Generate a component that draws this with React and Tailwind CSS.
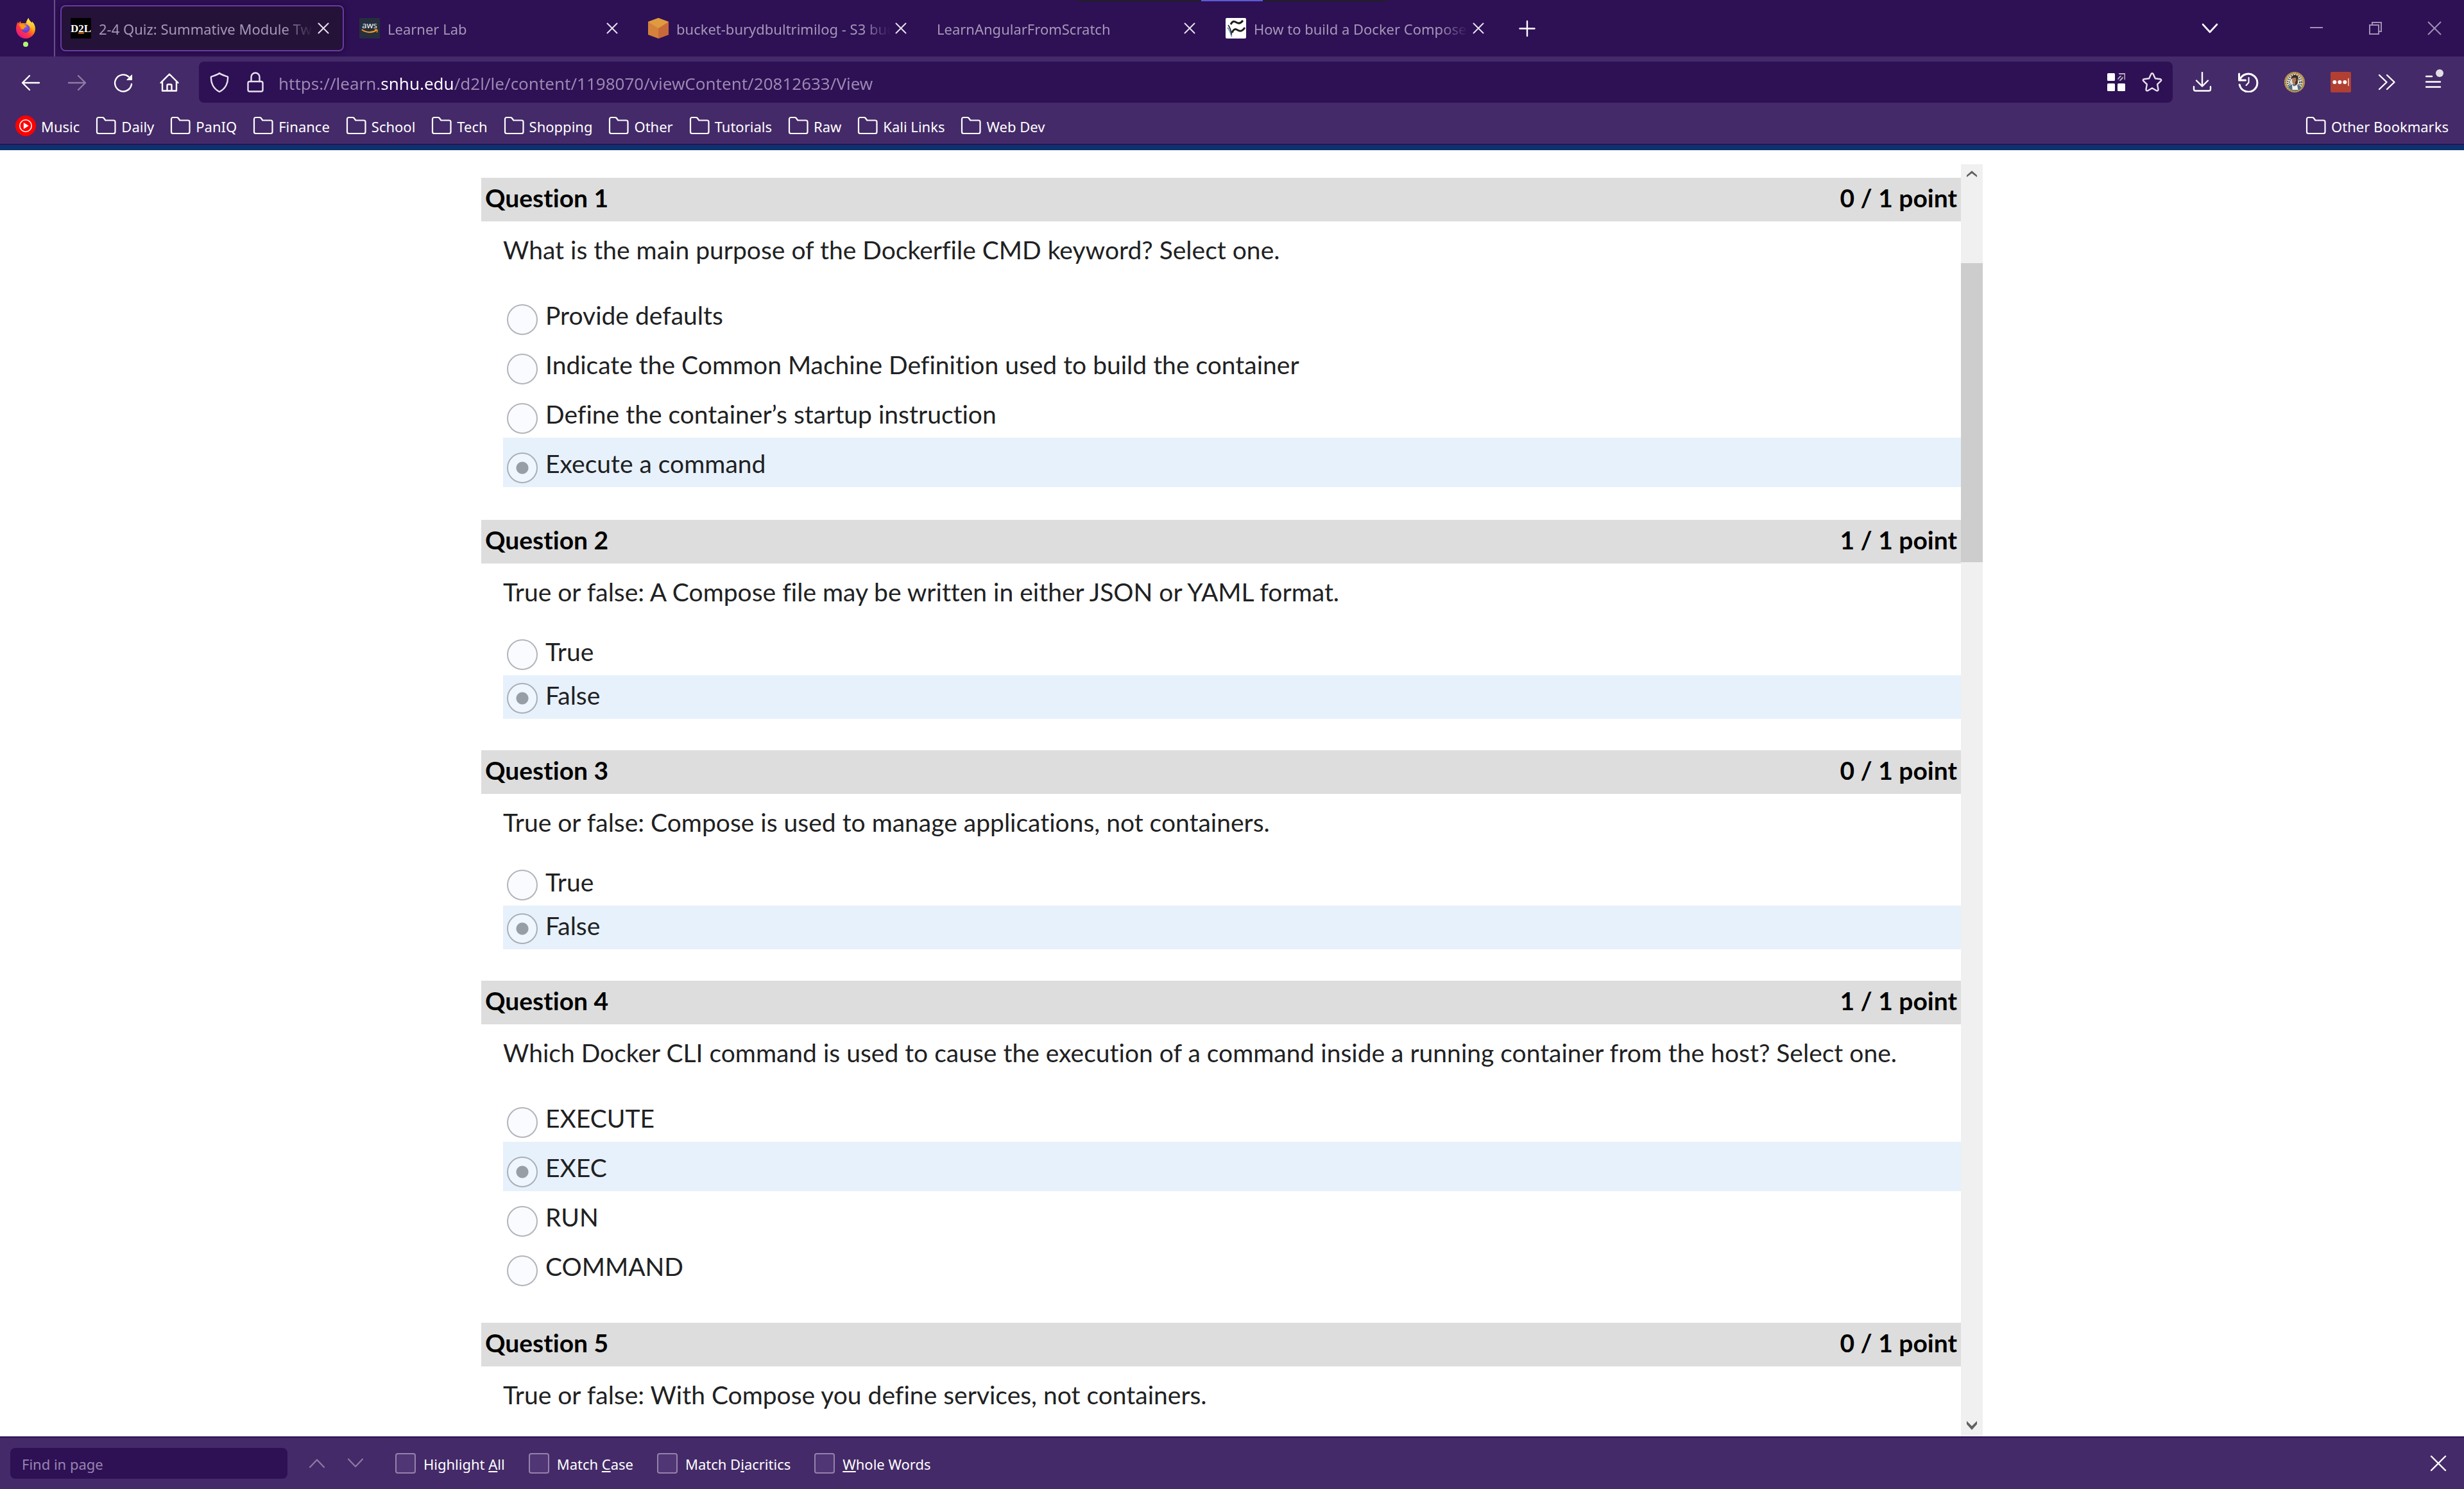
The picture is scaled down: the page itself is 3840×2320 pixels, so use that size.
const questions = [
  {
    points: "0 / 1 point",
    text: "What is the main purpose of the Dockerfile CMD keyword? Select one.",
    options: [
      "Provide defaults",
      "Indicate the Common Machine Definition used to build the container",
      "Define the container’s startup instruction",
      "Execute a command",
    ],
    chosen: 3,
  },
  {
    points: "1 / 1 point",
    text: "True or false: A Compose file may be written in either JSON or YAML format.",
    options: ["True", "False"],
    chosen: 1,
  },
  {
    points: "0 / 1 point",
    text: "True or false: Compose is used to manage applications, not containers.",
    options: ["True", "False"],
    chosen: 1,
  },
  {
    points: "1 / 1 point",
    text: "Which Docker CLI command is used to cause the execution of a command inside a running container from the host? Select one.",
    options: ["EXECUTE", "EXEC", "RUN", "COMMAND"],
    chosen: 1,
  },
  {
    points: "0 / 1 point",
    text: "True or false: With Compose you define services, not containers.",
    options: [],
    chosen: -1,
  },
];

function Icon({ size = 32, sw = 2.4, className = "", children }) {
  return (
    <svg
      width={size}
      height={size}
      viewBox="0 0 32 32"
      fill="none"
      stroke="currentColor"
      strokeWidth={sw}
      strokeLinecap="round"
      strokeLinejoin="round"
      className={className}
      aria-hidden="true"
    >
      {children}
    </svg>
  );
}

function FirefoxLogo() {
  return (
    <svg width="32" height="32" viewBox="0 0 32 32" aria-hidden="true">
      <defs>
        <linearGradient id="ffBody" x1="0.85" y1="0.1" x2="0.2" y2="0.95">
          <stop offset="0" stopColor="#fff44f" />
          <stop offset="0.35" stopColor="#ff980e" />
          <stop offset="0.65" stopColor="#ff3647" />
          <stop offset="1" stopColor="#e31587" />
        </linearGradient>
        <linearGradient id="ffTail" x1="0.5" y1="0" x2="0.5" y2="1">
          <stop offset="0" stopColor="#fff44f" />
          <stop offset="0.6" stopColor="#ffbd2f" />
          <stop offset="1" stopColor="#ff980e" />
        </linearGradient>
        <radialGradient id="ffGlobe" cx="0.5" cy="0.3" r="0.7">
          <stop offset="0" stopColor="#9059ff" />
          <stop offset="1" stopColor="#5b3bc4" />
        </radialGradient>
      </defs>
      <path
        d="M4 6c.3 1 .7 1.900 1.300 2.600C6 7.400 7 5.600 8 5c0 1.300.5 2.500 1.300 3.200 2.500-.5 4.800-.2 6.700.4C17 5 19.200 1.800 20.500 0c.6 4 3.500 5.300 5.200 7.500.5-.4.600-1.200.5-1.900C29.500 9 31 13 31 17c0 8.300-6.700 15-15 15S1 25.300 1 17C1 12.500 2.300 8.800 4 6z"
        fill="url(#ffBody)"
      />
      <path
        d="M20.500 0c.6 4 3.500 5.300 5.200 7.500 3.300 4 3.600 10 .9 14.300-.6-5-3.500-8.600-7.600-11.600C17 8.600 18 3.500 20.500 0z"
        fill="url(#ffTail)"
      />
      <circle cx="16" cy="16.500" r="6.400" fill="url(#ffGlobe)" />
      <path
        d="M5.500 10.500c3.500-1.800 6.500-1 9 .6 1.500.9 3 .8 3 1.700 0 1.300-2.600 1.500-3.300 2.200-.8.900-.3 2.300-1.700 2.700-1.800.5-3.500-.5-4.200-2-.6-1.700-1.500-3.500-2.800-5.200z"
        fill="#ff980e"
      />
    </svg>
  );
}

function D2LIcon() {
  return (
    <svg width="32" height="32" viewBox="0 0 32 32" aria-hidden="true">
      <rect width="32" height="32" fill="#000" />
      <text x="16" y="22" textAnchor="middle" fill="#fff" fontSize="17" fontWeight="700" fontFamily="'Liberation Serif', serif">
        D2L
      </text>
      <rect x="12" y="22.500" width="9" height="2" fill="#e8711c" />
    </svg>
  );
}

function AwsIcon() {
  return (
    <svg width="32" height="32" viewBox="0 0 32 32" aria-hidden="true">
      <rect width="32" height="32" fill="#252f3e" />
      <text x="16" y="16" textAnchor="middle" fill="#fff" fontSize="13" fontFamily="'Open Sans', sans-serif">
        aws
      </text>
      <path d="M4.500 18.500c6.500 4.700 15.500 4.900 22 .6" fill="none" stroke="#f7981f" strokeWidth="2" strokeLinecap="round" />
      <path d="M24.500 18.300c3-.7 4.500-.3 3 3.700" fill="none" stroke="#f7981f" strokeWidth="1.500" strokeLinecap="round" />
    </svg>
  );
}

function BucketIcon() {
  return (
    <svg width="32" height="32" viewBox="0 0 32 32" aria-hidden="true">
      <path d="M16 0 32 6v20l-16 6-16-6V6z" fill="#d4823a" />
      <path d="M32 6v20l-16 6V16z" fill="#c8693a" />
      <path d="M16 0 32 6 16 16 0 6z" fill="#e09a40" />
    </svg>
  );
}

function BlogIcon() {
  return (
    <svg width="32" height="32" viewBox="0 0 32 32" fill="none" aria-hidden="true">
      <rect width="32" height="32" rx="2" fill="#fff" />
      <path d="M3 15c3 3 5 8 6.500 14" stroke="#6f93bd" strokeWidth="2" />
      <path d="M4 11c3 4 4.500 8 5.500 15" stroke="#1d1d1f" strokeWidth="1.500" />
      <path d="M8 10c3-6 6-5 9-3 4 2.500 7 1 10-3" stroke="#1d1d1f" strokeWidth="3" />
      <path d="M10 23c3-7 6-6 9-4 4 2.500 8 1 11-4" stroke="#1d1d1f" strokeWidth="3" />
    </svg>
  );
}

const CloseGlyph = ({ size = 32, sw = 2 }) => (
  <Icon size={size} sw={sw}>
    <path d="M8.500 8.500l15 15M23.500 8.500l-15 15" />
  </Icon>
);

function Tab({ icon, title, active }) {
  return (
    <div className="w-[450px] shrink px-1 py-2">
      <div
        className={
          active
            ? "flex h-full items-center rounded-lg bg-[#251238] px-4 shadow-[0_0_8px_rgba(0,0,0,0.5)] ring-2 ring-[#6b38a8] ring-inset"
            : "flex h-full items-center rounded-lg px-4"
        }
      >
        {icon && <span className="mr-3 shrink-0">{icon}</span>}
        <span className="min-w-0 flex-1 overflow-hidden pt-0.5 whitespace-nowrap text-[#a698b7] [mask-image:linear-gradient(90deg,#000_calc(100%-44px),transparent_100%)]">
          {title}
        </span>
        <button className="shrink-0 text-[#e6e1ec]" aria-label={`Close ${title}`}>
          <CloseGlyph />
        </button>
      </div>
    </div>
  );
}

function TitleBar() {
  return (
    <header className="relative flex h-[88px] shrink-0 bg-[#2e1055]">
      <div className="absolute top-0 left-1/2 flex h-0.5 w-[482px] -translate-x-1/2 justify-center bg-[#1f1f23]">
        <div className="w-24 bg-[#5b5bd6]" />
      </div>
      <button className="flex w-[86px] shrink-0 flex-col items-center border-r-2 border-[#66508a] pt-7 pr-1" aria-label="Pinned tab">
        <FirefoxLogo />
        <span className="mt-[5px] size-2 rounded-full bg-[#b3f772]" />
      </button>
      <nav className="flex min-w-0 pl-1" aria-label="Tabs">
        <Tab icon={<D2LIcon />} title="2-4 Quiz: Summative Module Two" active />
        <Tab icon={<AwsIcon />} title="Learner Lab" />
        <Tab icon={<BucketIcon />} title="bucket-burydbultrimilog - S3 bucket" />
        <Tab title="LearnAngularFromScratch" />
        <Tab icon={<BlogIcon />} title="How to build a Docker Compose" />
      </nav>
      <button className="flex w-20 shrink-0 items-center justify-center text-white" aria-label="New tab">
        <Icon>
          <path d="M16 5v23M4.500 16.500h23" />
        </Icon>
      </button>
      <div className="ml-auto flex shrink-0 text-[#a08fb4]">
        <button className="mr-[88px] flex w-16 items-center justify-center text-white" aria-label="List all tabs">
          <Icon sw={2.600}>
            <path d="M5 10l11 12L27 10" />
          </Icon>
        </button>
        <button className="flex w-[92px] items-center justify-center" aria-label="Minimize">
          <svg width="20" height="20">
            <path d="M0 9h20" stroke="currentColor" strokeWidth="2" />
          </svg>
        </button>
        <button className="flex w-[92px] items-center justify-center" aria-label="Restore">
          <svg width="20" height="20" fill="none" stroke="currentColor" strokeWidth="2">
            <path d="M1 5h14v14H1zM5 5V1h14v14h-4" />
          </svg>
        </button>
        <button className="flex w-[92px] items-center justify-center" aria-label="Close window">
          <svg width="22" height="22" fill="none" stroke="currentColor" strokeWidth="2">
            <path d="M1 1l20 20M21 1L1 21" />
          </svg>
        </button>
      </div>
    </header>
  );
}

function ToolButton({ label, className = "w-[72px]", children }) {
  return (
    <button className={`${className} flex h-16 shrink-0 items-center justify-center`} aria-label={label}>
      {children}
    </button>
  );
}

function Toolbar() {
  return (
    <div className="flex h-20 shrink-0 items-center px-3 text-white">
      <ToolButton label="Back">
        <Icon>
          <path d="M29 17H3M14 6L3 17l11 11" />
        </Icon>
      </ToolButton>
      <ToolButton label="Forward">
        <Icon className="text-[#8d7ba3]">
          <path d="M3 17h26M18 6l11 11-11 11" />
        </Icon>
      </ToolButton>
      <ToolButton label="Reload">
        <Icon>
          <path d="M24.500 7.500A13 13 0 1 0 29 19" />
          <path d="M29.500 5v7.500H22z" fill="currentColor" strokeWidth="1" />
        </Icon>
      </ToolButton>
      <ToolButton label="Home">
        <Icon>
          <path d="M2.500 17L16 3.500 29.500 17M5 15v14.500h22V15M12.500 29V21a1.500 1.500 0 0 1 1.500-1.500h4a1.500 1.500 0 0 1 1.500 1.500v8" />
        </Icon>
      </ToolButton>
      <div className="mx-[10px] flex min-w-0 flex-1 items-center rounded-lg bg-[#2e1055] px-1 text-[#e6e1ec]">
        <ToolButton label="Tracking protection" className="w-14">
          <Icon>
            <path d="M16 2C12.500 5 7 6 3 7.500c-.7 9 3 18.500 13 23.500 10-5 13.700-14.500 13-23.500C25 6 19.500 5 16 2z" />
          </Icon>
        </ToolButton>
        <ToolButton label="Site information" className="w-14">
          <Icon>
            <rect x="4.500" y="15" width="23" height="15.500" rx="2.500" />
            <path d="M9.500 15V8a6.500 6.500 0 0 1 13 0v7" />
          </Icon>
        </ToolButton>
        <input
          type="text"
          aria-label="Address"
          defaultValue="https://learn.snhu.edu/d2l/le/content/1198070/viewContent/20812633/View"
          className="ml-2 h-16 min-w-0 flex-1 bg-[linear-gradient(90deg,#9c8ab1_158px,#fff_158px,#fff_273px,#9c8ab1_273px)] bg-clip-text pt-1 text-[26px] text-transparent outline-none"
        />
        <ToolButton label="Extensions in page" className="w-14">
          <svg width="28" height="28" viewBox="0 0 28 28" aria-hidden="true">
            <g fill="#fff">
              <rect width="12" height="12" rx="1.500" />
              <rect y="16" width="12" height="12" rx="1.500" />
              <rect x="16" y="16" width="12" height="12" rx="1.500" />
            </g>
            <path d="M17.500 0H28v11l-3-3-4.500 4-3.500-1-1-2.500L20 4z" fill="#b9b3c0" />
            <path d="M17.500 11l7.500-8M19 3h6.500v6.500" fill="none" stroke="#2e1055" strokeWidth="2" />
          </svg>
        </ToolButton>
        <ToolButton label="Bookmark this page" className="w-14">
          <Icon>
            <path d="M16 2.200c.8 0 1.300.4 1.600 1.100l3.200 7 7.700.9c1.700.2 2.300 1.900 1.100 3l-5.500 5.200 1.400 7.800c.3 1.700-1.200 2.800-2.700 2L16 25.300l-6.800 3.900c-1.500.8-3-.3-2.700-2l1.400-7.800-5.500-5.200c-1.200-1.100-.6-2.800 1.100-3l7.700-.9 3.200-7c.3-.7.8-1.100 1.600-1.100z" />
          </Icon>
        </ToolButton>
      </div>
      <ToolButton label="Downloads">
        <Icon>
          <path d="M16 1v21M7 13.500l9 9 9-9M3 23v4a2.500 2.500 0 0 0 2.500 2.500h21A2.500 2.500 0 0 0 29 27v-4" />
        </Icon>
      </ToolButton>
      <ToolButton label="History">
        <Icon sw={3}>
          <path d="M1.500 3v10h10M2.500 13A14 14 0 1 1 2.200 20" />
          <path d="M16.500 9v7.500L12.500 21" strokeWidth="2" />
        </Icon>
      </ToolButton>
      <ToolButton label="Profile extension">
        <svg width="32" height="32" viewBox="0 0 32 32" aria-hidden="true">
          <circle cx="16" cy="16" r="16" fill="#c9a75e" />
          <circle cx="16" cy="16" r="14.500" fill="none" stroke="#6b5325" strokeWidth="1" strokeDasharray="2 1.500" />
          <circle cx="16" cy="16" r="12.500" fill="#dededa" />
          <circle cx="16" cy="16" r="11" fill="none" stroke="#45453f" strokeWidth="2.500" strokeDasharray="1.500 2" />
          <circle cx="16" cy="16" r="8" fill="none" stroke="#45453f" strokeWidth="2" strokeDasharray="1.500 2" />
          <path d="M6 24c2-4 5-4 8-5l6 1c3 1 5 2 6.500 4.500A12.500 12.500 0 0 1 6 24z" fill="#4d6f85" />
          <path d="M12 19.500l3 3 5-2.500 1.500 8h-9z" fill="#f2f0ec" />
          <ellipse cx="16.500" cy="13.500" rx="4.500" ry="6.500" fill="#b07a5a" />
          <path d="M11 12c-.5-5 2.500-7.500 6-7 4 .4 5.500 3.500 4.500 8-1-3-3-4.500-5.500-4-2.500 0-4 1-5 3z" fill="#3a2b20" />
          <path d="M17 15h4l-1 4-3 2z" fill="#4a3223" />
          <path d="M18 9c3 1 3.500 4 2.500 9l-2 2z" fill="#4a3223" />
        </svg>
      </ToolButton>
      <ToolButton label="Password manager">
        <svg width="32" height="32" viewBox="0 0 32 32" aria-hidden="true">
          <rect width="32" height="32" rx="2" fill="#b14033" />
          <circle cx="6.300" cy="16" r="3" fill="#fff" />
          <circle cx="14.300" cy="16" r="3" fill="#fff" />
          <circle cx="22.300" cy="16" r="3" fill="#fff" />
          <rect x="27" y="10" width="1.800" height="12" fill="#e8b9b3" />
        </svg>
      </ToolButton>
      <ToolButton label="More tools">
        <Icon>
          <path d="M4 5l11.500 11L4 27M16 5l11.500 11L16 27" />
        </Icon>
      </ToolButton>
      <ToolButton label="Open application menu">
        <svg width="32" height="32" viewBox="0 0 32 32" className="overflow-visible" aria-hidden="true">
          <path d="M5 7h9M5 15.500h22M5 23.500h22" stroke="#fff" strokeWidth="2.400" strokeLinecap="round" />
          <circle cx="26" cy="2" r="6" fill="#e1dee6" />
        </svg>
      </ToolButton>
    </div>
  );
}

function Bookmark({ label, icon }) {
  return (
    <a href="#" className="flex items-center gap-2">
      {icon || (
        <Icon sw={2.200}>
          <path d="M2 5.500A2.500 2.500 0 0 1 4.500 3h6c1 0 1.700.3 2.300 1l2.500 3.500H28A2.500 2.500 0 0 1 30.500 10v15.500A2.500 2.500 0 0 1 28 28H4.500A2.500 2.500 0 0 1 2 25.500z" />
        </Icon>
      )}
      <span className="pt-0.5 whitespace-nowrap">{label}</span>
    </a>
  );
}

function MusicIcon() {
  return (
    <svg width="32" height="32" viewBox="0 0 32 32" aria-hidden="true">
      <circle cx="16" cy="16" r="16" fill="#f00" />
      <circle cx="16" cy="16" r="9.200" fill="none" stroke="#fff" strokeWidth="1.600" />
      <path d="M12.800 11v10l8-5z" fill="#fff" />
    </svg>
  );
}

function BookmarksBar() {
  return (
    <nav className="flex h-14 shrink-0 items-center gap-[25px] px-6 text-white" aria-label="Bookmarks">
      <Bookmark label="Music" icon={<MusicIcon />} />
      {["Daily", "PanIQ", "Finance", "School", "Tech", "Shopping", "Other", "Tutorials", "Raw", "Kali Links", "Web Dev"].map((b) => (
        <Bookmark key={b} label={b} />
      ))}
      <div className="ml-auto">
        <Bookmark label="Other Bookmarks" />
      </div>
    </nav>
  );
}

function Option({ name, label, chosen, roomy }) {
  return (
    <label
      className={
        "flex items-start gap-3 pl-1.5 " + (roomy ? "h-[77px] " : "h-[68px] ") + (chosen ? "bg-[#e7f1fc]" : "")
      }
    >
      <input
        type="radio"
        name={name}
        defaultChecked={chosen}
        className={
          (roomy ? "mt-[23px] " : "mt-3 ") +
          "size-12 shrink-0 appearance-none rounded-full border-2 border-[#b2b5b9] bg-[#fafbff] checked:border-[#a8afb6] checked:bg-[#eff6fe] checked:bg-[radial-gradient(circle,#979ea6_9px,transparent_10px)]"
        }
      />
      <span className={roomy ? "pt-4" : "pt-[7px]"}>{label}</span>
    </label>
  );
}

function Question({ number, question }) {
  const roomy = question.options.length > 2;
  return (
    <section className="mb-[49px]">
      <div className="flex h-[68px] items-center justify-between bg-[#ddd] px-1.5 pb-1.5 font-bold text-black">
        <h2>Question {number}</h2>
        <span>{question.points}</span>
      </div>
      <fieldset className="pl-[34px]">
        <legend className="pt-5 pb-[38px]">{question.text}</legend>
        <div className={roomy ? "pb-0.5" : ""}>
          {question.options.map((label, i) => (
            <Option key={label} name={`question-${number}`} label={label} chosen={i === question.chosen} roomy={roomy} />
          ))}
        </div>
      </fieldset>
    </section>
  );
}

function ScrollBar() {
  return (
    <div className="flex w-[34px] shrink-0 flex-col bg-[#f0f0f0] text-[#606060]">
      <button className="flex h-[34px] items-center justify-center pb-1" aria-label="Scroll up">
        <svg width="16" height="10" viewBox="0 0 16 10">
          <path d="M0 7L8 0l8 7v3L8 4 0 10z" fill="currentColor" />
        </svg>
      </button>
      <div className="flex-1 pt-[120px]">
        <div className="h-[466px] bg-[#cdcdcd]" />
      </div>
      <button className="flex h-[34px] items-center justify-center" aria-label="Scroll down">
        <svg width="16" height="14" viewBox="0 0 16 14">
          <path d="M0 0l8 8 8-8v5l-8 9-8-9z" fill="currentColor" />
        </svg>
      </button>
    </div>
  );
}

function FindCheck({ children }) {
  return (
    <label className="flex items-center gap-3">
      <input type="checkbox" className="size-8 appearance-none rounded-sm border-2 border-[#9581ac] bg-[#503674]" />
      <span className="pt-0.5">{children}</span>
    </label>
  );
}

function FindBar() {
  return (
    <footer className="flex h-[82px] shrink-0 items-center border-t-2 border-[#2e1055] bg-[#442a68] pr-4 pl-4 text-white">
      <input
        type="text"
        aria-label="Find in page"
        placeholder="Find in page"
        className="h-12 w-[432px] rounded-lg bg-[#2e1055] px-[18px] pt-0.5 outline-none placeholder:text-[#9785ad]"
      />
      <button className="ml-4 flex w-[60px] justify-center text-[#8d7ba3]" aria-label="Previous match">
        <Icon sw={2.200}>
          <path d="M5 22l11-11.500L27 22" />
        </Icon>
      </button>
      <button className="flex w-[60px] justify-center text-[#8d7ba3]" aria-label="Next match">
        <Icon sw={2.200}>
          <path d="M5 9.500L16 21 27 9.500" />
        </Icon>
      </button>
      <div className="ml-8 flex gap-[37px]">
        <FindCheck>
          Highlight <u>A</u>ll
        </FindCheck>
        <FindCheck>
          Match <u>C</u>ase
        </FindCheck>
        <FindCheck>
          Match D<u>i</u>acritics
        </FindCheck>
        <FindCheck>
          <u>W</u>hole Words
        </FindCheck>
      </div>
      <button className="ml-auto flex w-12 justify-center" aria-label="Close find bar">
        <Icon>
          <path d="M5 5l22 22M27 5L5 27" />
        </Icon>
      </button>
    </footer>
  );
}

export default function App() {
  return (
    <div className="flex h-screen flex-col bg-white font-['Noto_Sans',sans-serif] text-[22px] leading-[30px]">
      <TitleBar />
      <div className="shrink-0 border-b-2 border-[#2e1055] bg-[#442a68]">
        <Toolbar />
        <BookmarksBar />
      </div>
      <div className="h-2 shrink-0 bg-[#0a3370]" />
      <main className="mx-auto flex min-h-0 w-full max-w-[2340px] flex-1 pt-[22px] font-['Lato',sans-serif] text-[39px] leading-[48px] text-[#202122] [font-variant-ligatures:none]">
        <div className="min-w-0 flex-1 overflow-hidden pt-[21px]">
          {questions.map((q, i) => (
            <Question key={i} number={i + 1} question={q} />
          ))}
        </div>
        <ScrollBar />
      </main>
      <FindBar />
    </div>
  );
}
